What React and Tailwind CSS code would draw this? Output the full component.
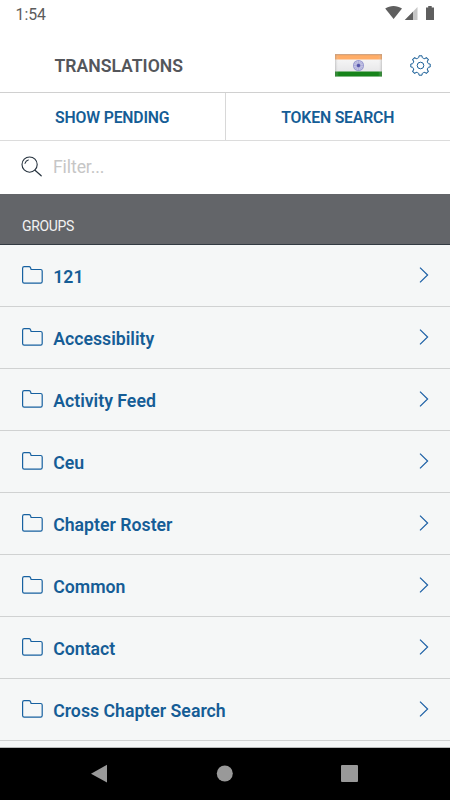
const groups = [
  '121',
  'Accessibility',
  'Activity Feed',
  'Ceu',
  'Chapter Roster',
  'Common',
  'Contact',
  'Cross Chapter Search',
];

function StatusBar() {
  return (
    <div className="flex h-7 shrink-0 items-start justify-between pl-[15.5px] pr-[15px] text-[#5c5c5c]">
      <span className="pt-[5px] text-[15.8px] leading-5">1:54</span>
      <svg className="mt-[5px] h-4 w-[50px]" viewBox="0 0 50 16" fill="#5f5f5f">
        <path d="M0.2 3.6C5 0.1 12 0.1 17 3.6L8.6 14Z" />
        <path d="M19.8 15 32.5 2V15Z" fill="#c6c6c6" />
        <path d="M19.8 15 28 6.8V15Z" />
        <path d="M41 2.6h2.2V1h3.5v1.6H49V15h-8Z" />
      </svg>
    </div>
  );
}

function Flag() {
  const spokes = Array.from({ length: 12 }, (_, i) => i * 30);
  return (
    <svg className="h-[23px] w-[48px]" viewBox="0 0 48 23">
      <defs>
        <linearGradient id="sheen" x1="0" x2="1" y1="0" y2="0">
          <stop offset="0" stopColor="#777" stopOpacity="0.35" />
          <stop offset="0.08" stopColor="#fff" stopOpacity="0" />
          <stop offset="0.92" stopColor="#fff" stopOpacity="0" />
          <stop offset="1" stopColor="#777" stopOpacity="0.35" />
        </linearGradient>
        <linearGradient id="white" x1="0" x2="0" y1="0" y2="1">
          <stop offset="0" stopColor="#fafafa" />
          <stop offset="1" stopColor="#e2e2e4" />
        </linearGradient>
      </defs>
      <rect x="1" y="0.5" width="47" height="22" fill="url(#white)" />
      <rect x="1" y="0.5" width="47" height="5" fill="#ffad68" />
      <rect x="1" y="17.5" width="47" height="5" fill="#16831a" />
      <rect x="1" y="0.5" width="47" height="22" fill="url(#sheen)" />
      <path d="M1 0.7h47" stroke="#b98a68" strokeWidth="0.8" />
      <circle cx="24.5" cy="11.5" r="5" fill="#c9c9e6" stroke="#9c9cd2" strokeWidth="1.1" />
      {spokes.map((a) => (
        <path key={a} d="M24.5 11.5V7" stroke="#8e8ecb" strokeWidth="0.4" transform={`rotate(${a} 24.5 11.5)`} />
      ))}
      <circle cx="24.5" cy="11.5" r="1.7" fill="#5454aa" />
    </svg>
  );
}

function Gear() {
  const teeth = Array.from({ length: 8 }, (_, i) => i * 45);
  return (
    <svg className="h-[22px] w-[22px]" viewBox="-11 -11 22 22" fill="none" stroke="#1d6199" strokeWidth="1">
      <g transform="translate(0.5 -0.5)">
        <circle r="3.3" />
        {teeth.map((a) => (
          <path
            key={a}
            d="M-3 -7.3C-2.3 -7.1 -1.8 -7.7 -1.7 -8.4L-1.5 -9.7H1.5L1.7 -8.4C1.8 -7.7 2.3 -7.1 3 -7.3"
            transform={`rotate(${a})`}
            strokeLinejoin="round"
          />
        ))}
      </g>
    </svg>
  );
}

function SearchIcon() {
  return (
    <svg className="h-[22px] w-[22px]" viewBox="0 0 22 22" fill="none" stroke="#26323e" strokeWidth="1.1" strokeLinecap="round">
      <circle cx="8.6" cy="8.6" r="7.6" />
      <path d="M14 14.2 20.2 19.8" strokeWidth="1.2" />
      <path d="M4 7.3C4.6 5.5 5.7 4.4 7.3 4" />
    </svg>
  );
}

function Folder() {
  return (
    <svg className="h-[18px] w-[21px]" viewBox="0 0 21 18" fill="none" stroke="#1761a0" strokeWidth="1.2" strokeLinejoin="round">
      <path d="M0.6 2.2Q0.6 0.6 2.2 0.6H7Q8.1 0.6 8.5 1.6L9.1 3.5H18.6Q20.2 3.5 20.2 5.1V15.6Q20.2 17.2 18.6 17.2H2.2Q0.6 17.2 0.6 15.6Z" />
    </svg>
  );
}

function GroupRow({ name }) {
  return (
    <li className="flex h-[62px] shrink-0 items-center border-b border-[#d0d2d2] pl-[22px] pr-[21px] text-[#155d96]">
      <div className="pb-[1px]">
        <Folder />
      </div>
      <span className="ml-[10.2px] flex-1 pt-[2px] text-[17.7px] font-semibold leading-6">{name}</span>
      <svg className="mb-[1px] h-4 w-[10px]" viewBox="0 0 10 16" fill="none" stroke="#1b5fa5" strokeWidth="1.2">
        <path d="M1 0.6 8.6 8 1 15.4" />
      </svg>
    </li>
  );
}

export default function App() {
  return (
    <div className="flex h-[800px] w-[450px] flex-col overflow-hidden bg-white font-['Roboto',sans-serif]">
      <StatusBar />
      <header className="flex h-[65px] shrink-0 items-center border-b border-[#d0d0d0] pl-[54.5px] pr-[19px] pt-[11px]">
        <h1 className="flex-1 pt-px text-[17.6px] font-semibold leading-6 text-[#54565b]">TRANSLATIONS</h1>
        <Flag />
        <div className="ml-[27px]">
          <Gear />
        </div>
      </header>
      <div className="flex h-12 shrink-0 border-b border-[#dcdcdc] text-[15.8px] font-semibold tracking-[-0.18px] text-[#155d96]">
        <button className="flex-1 border-r border-[#d8d8d8] pt-[3px]">SHOW PENDING</button>
        <button className="flex-1 pt-[3px]">TOKEN SEARCH</button>
      </div>
      <div className="flex h-[53px] shrink-0 items-center pl-[21px] pb-[1px]">
        <SearchIcon />
        <span className="ml-[10px] text-[17.6px] leading-6 tracking-[-0.1px] text-[#c6c6c6]">Filter...</span>
      </div>
      <div className="flex h-[51px] shrink-0 items-end border-b border-[#323a42] bg-[#636569] pb-[8px] pl-[22px] text-[14px] leading-5 tracking-[-0.35px] text-[#f2f2f2]">
        GROUPS
      </div>
      <ul className="flex min-h-0 flex-1 flex-col overflow-hidden bg-[#f5f7f7]">
        {groups.map((name) => (
          <GroupRow key={name} name={name} />
        ))}
      </ul>
      <nav className="flex h-[53px] shrink-0 border-t border-[#b7b9b9] bg-black">
        <svg className="h-[52px] w-[450px]" viewBox="0 0 450 52" fill="#999">
          <path d="M91 25.7 107 16.8V34.6Z" />
          <circle cx="224.8" cy="25.5" r="8" />
          <rect x="341" y="17" width="17" height="17" rx="1" />
        </svg>
      </nav>
    </div>
  );
}
